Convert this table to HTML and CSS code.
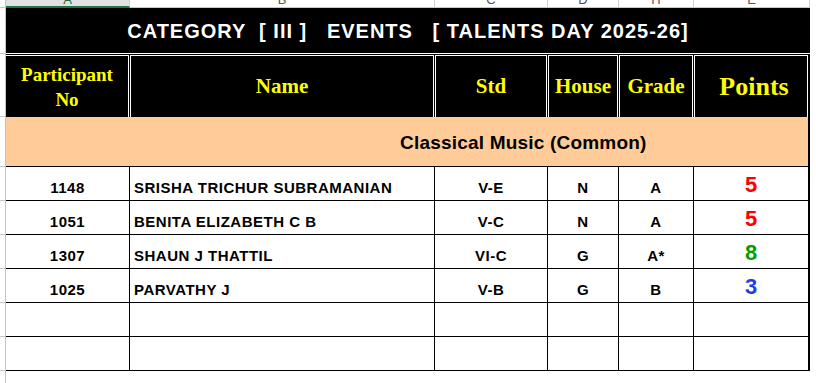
FILE: index.html
```html
<!DOCTYPE html>
<html>
<head>
<meta charset="utf-8">
<link rel="stylesheet" href="styles.css">
</head>
<body>
<div class="page">
  <div class="gutter">
    <div class="g g-strip"></div>
    <div class="g g-title"></div>
    <div class="g g-head"></div>
    <div class="g g-sec"></div>
    <div class="g g-row"></div>
    <div class="g g-row"></div>
    <div class="g g-row"></div>
    <div class="g g-row"></div>
    <div class="g g-row"></div>
    <div class="g g-row"></div>
  </div>
  <div class="sheet">
    <div class="colhdr">
      <div class="ch ch-sel"><span>A</span></div>
      <div class="ch"><span>B</span></div>
      <div class="ch"><span>C</span></div>
      <div class="ch"><span>D</span></div>
      <div class="ch"><span>H</span></div>
      <div class="ch"><span>E</span></div>
    </div>
    <div class="title">CATEGORY  [ III ]   EVENTS   [ TALENTS DAY 2025-26]</div>
    <div class="head">
      <div class="hc hc-first hc-pno">Participant<br>No</div>
      <div class="hc">Name</div>
      <div class="hc">Std</div>
      <div class="hc">House</div>
      <div class="hc">Grade</div>
      <div class="hc hc-pts">Points</div>
    </div>
    <div class="section">Classical Music (Common)</div>
    <div class="data">
      <div class="c c-center">1148</div>
      <div class="c c-name">SRISHA TRICHUR SUBRAMANIAN</div>
      <div class="c c-center">V-E</div>
      <div class="c c-center">N</div>
      <div class="c c-center">A</div>
      <div class="c c-pts red">5</div>

      <div class="c c-center">1051</div>
      <div class="c c-name">BENITA ELIZABETH C B</div>
      <div class="c c-center">V-C</div>
      <div class="c c-center">N</div>
      <div class="c c-center">A</div>
      <div class="c c-pts red">5</div>

      <div class="c c-center">1307</div>
      <div class="c c-name">SHAUN J THATTIL</div>
      <div class="c c-center">VI-C</div>
      <div class="c c-center">G</div>
      <div class="c c-center">A*</div>
      <div class="c c-pts green">8</div>

      <div class="c c-center">1025</div>
      <div class="c c-name">PARVATHY J</div>
      <div class="c c-center">V-B</div>
      <div class="c c-center">G</div>
      <div class="c c-center">B</div>
      <div class="c c-pts blue">3</div>

      <div class="c"></div>
      <div class="c"></div>
      <div class="c"></div>
      <div class="c"></div>
      <div class="c"></div>
      <div class="c"></div>

      <div class="c"></div>
      <div class="c"></div>
      <div class="c"></div>
      <div class="c"></div>
      <div class="c"></div>
      <div class="c"></div>
    </div>
  </div>
</div>
</body>
</html>
```

FILE: styles.css
```css
* { box-sizing: border-box; }

html, body {
  margin: 0;
  padding: 0;
  background: #ffffff;
  overflow: hidden;
}

.page {
  display: flex;
  align-items: flex-start;
  width: 816px;
  height: 383px;
}

/* row-number gutter */
.gutter {
  width: 6px;
  height: 383px;
  border-right: 1px solid #c4c4c4;
  display: flex;
  flex-direction: column;
  flex: none;
}
.g { border-bottom: 1px solid #c8c8c8; flex: none; }
.g-strip { height: 8px; }
.g-title { height: 46px; }
.g-head { height: 63px; }
.g-sec { height: 50px; }
.g-row { height: 34px; }

.sheet {
  width: 804px;
  flex: none;
  display: flex;
  flex-direction: column;
}

/* column letter strip */
.colhdr {
  display: grid;
  grid-template-columns: 124px 305px 113px 71px 75px 116px;
  height: 8px;
}
.ch {
  height: 8px;
  overflow: hidden;
  border-right: 1px solid #cfcfcf;
  border-bottom: 1px solid #c8c8c8;
  text-align: center;
  font-family: "Liberation Sans", Arial, sans-serif;
  font-size: 13px;
  line-height: 14px;
  color: #555555;
}
.ch span {
  display: block;
  margin-top: -7px;
}
.ch-sel {
  background: #e1e1e1;
  border-bottom: 2px solid #217346;
  color: #1e6b40;
}

/* title */
.title {
  height: 46px;
  background: #000000;
  border-bottom: 1px solid #ffffff;
  color: #ffffff;
  font-family: "Liberation Sans", Arial, sans-serif;
  font-weight: bold;
  font-size: 20px;
  letter-spacing: 1px;
  line-height: 1;
  white-space: pre;
  display: flex;
  align-items: center;
  justify-content: center;
}

/* header row */
.head {
  display: grid;
  grid-template-columns: 123px 304px 112px 70px 74px 114px;
  column-gap: 1px;
  background: #000000;
  padding: 1px 2px 0 0;
  height: 63px;
}
.hc {
  height: 62px;
  border-top: 1px solid #ffffff;
  border-left: 1px solid #ffffff;
  border-right: 1px solid #ffffff;
  display: flex;
  align-items: center;
  justify-content: center;
  text-align: center;
  color: #ffff00;
  font-family: "Liberation Serif", "Times New Roman", serif;
  font-weight: bold;
  font-size: 21px;
  line-height: 1;
}
.hc-first { border-left: none; }
.hc-pno { font-size: 19px; line-height: 25px; }
.hc-pts { font-size: 26px; padding-left: 6px; }

/* section row */
.section {
  height: 49px;
  background: #ffcc99;
  border-right: 2px solid #000000;
  display: flex;
  align-items: center;
  padding: 2px 0 0 394px;
  font-family: "Liberation Sans", Arial, sans-serif;
  font-weight: bold;
  font-size: 19px;
  letter-spacing: 0.2px;
  line-height: 1;
  color: #000000;
}

/* data grid */
.data {
  display: grid;
  grid-template-columns: 123px 304px 112px 70px 74px 114px;
  grid-auto-rows: 33px;
  column-gap: 1px;
  row-gap: 1px;
  background: #000000;
  padding: 1px 2px 1px 0;
}
.c {
  background: #ffffff;
  display: flex;
  align-items: flex-end;
  padding-bottom: 5px;
  font-family: "Liberation Sans", Arial, sans-serif;
  font-weight: bold;
  font-size: 15px;
  letter-spacing: 0.5px;
  line-height: 1;
  color: #000000;
}
.c-center { justify-content: center; }
.c-name { padding-left: 4px; }
.c-pts {
  justify-content: center;
  font-size: 22px;
  letter-spacing: 0;
  padding-bottom: 4px;
}
.red { color: #ff0000; }
.green { color: #00a000; }
.blue { color: #1f3fe6; }
```
